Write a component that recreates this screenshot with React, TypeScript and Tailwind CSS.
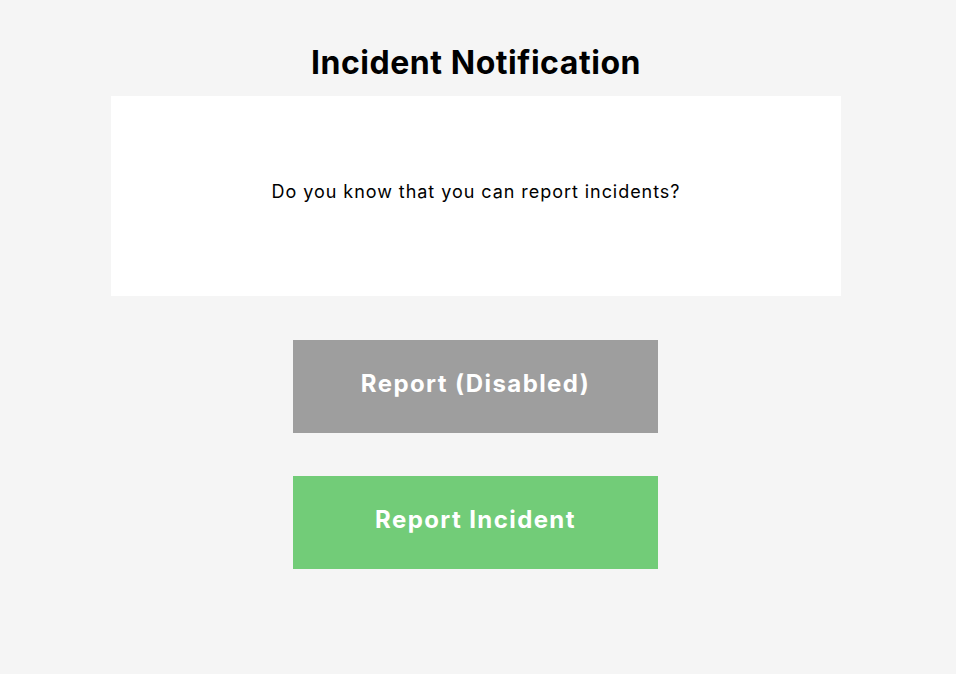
export default function App() {
  return (
    <div
      className="min-h-[674px] w-full bg-[#f5f5f5] flex flex-col items-center pt-[43px]"
      style={{ fontFamily: "Inter, 'Noto Sans', sans-serif" }}
    >
      <h1 className="text-[32px] leading-[40px] font-bold text-black tracking-[0.55px] mr-[4px]">
        Incident Notification
      </h1>
      <div className="mt-[13px] w-[730px] h-[200px] bg-white flex items-center justify-center mr-[4px]">
        <p className="text-[18px] text-black tracking-[0.95px] -mt-[10px]">
          Do you know that you can report incidents?
        </p>
      </div>
      <div className="mt-[44px] flex flex-col gap-[43px] mr-[5px]">
        <button
          disabled
          className="w-[365px] h-[93px] pb-[6px] bg-[#9e9e9e] text-white text-[24px] font-bold tracking-[1.4px]"
        >
          Report (Disabled)
        </button>
        <button className="w-[365px] h-[93px] pb-[6px] bg-[#72cc78] text-white text-[24px] font-bold tracking-[1.4px]">
          Report Incident
        </button>
      </div>
    </div>
  );
}
